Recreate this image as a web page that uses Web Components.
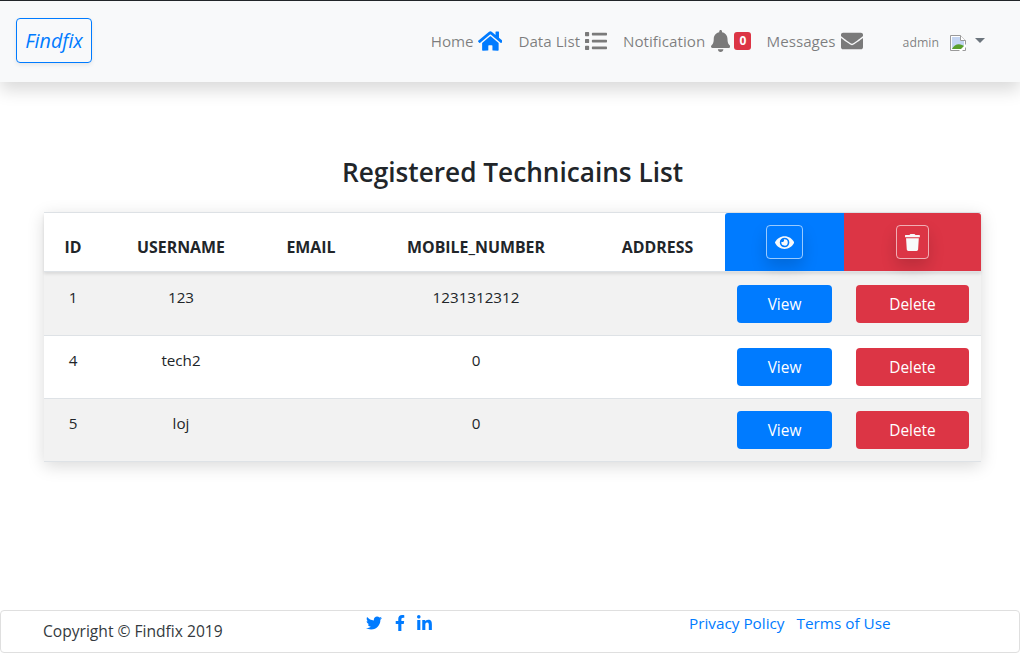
<!DOCTYPE html>
<html lang="en">
<head>
<meta charset="utf-8">
<title>Findfix</title>
<style>
  html, body { margin: 0; padding: 0; background: #fff; }
  body { font-family: "Open Sans", "Liberation Sans", sans-serif; font-size: 15px; color: #212529; overflow: hidden; height: 654px; }
</style>
</head>
<body>
<app-navbar>
  <nav-link label="Home" icon="home" active></nav-link>
  <nav-link label="Data List" icon="list"></nav-link>
  <nav-link label="Notification" icon="bell" badge="0"></nav-link>
  <nav-link label="Messages" icon="envelope"></nav-link>
</app-navbar>

<tech-list heading="Registered Technicains List">
  <tech-row uid="1" username="123" mobile="1231312312" shade></tech-row>
  <tech-row uid="4" username="tech2" mobile="0"></tech-row>
  <tech-row uid="5" username="loj" mobile="0" shade></tech-row>
</tech-list>

<app-footer></app-footer>

<script>
const ICONS = {
  home: ['0 0 576 512', 'M280.37 148.26L96 300.11V464a16 16 0 0 0 16 16l112.06-.29a16 16 0 0 0 15.92-16V368a16 16 0 0 1 16-16h64a16 16 0 0 1 16 16v95.64a16 16 0 0 0 16 16.05L464 480a16 16 0 0 0 16-16V300L295.67 148.26a12.19 12.19 0 0 0-15.3 0zM571.6 251.47L488 182.56V44.05a12 12 0 0 0-12-12h-56a12 12 0 0 0-12 12v72.61L318.47 43a48 48 0 0 0-61 0L4.34 251.47a12 12 0 0 0-1.6 16.9l25.5 31A12 12 0 0 0 45.15 301l235.22-193.74a12.19 12.19 0 0 1 15.3 0L530.9 301a12 12 0 0 0 16.9-1.6l25.5-31a12 12 0 0 0-1.7-16.93z'],
  list: ['0 0 512 512', 'M80 368H16a16 16 0 0 0-16 16v64a16 16 0 0 0 16 16h64a16 16 0 0 0 16-16v-64a16 16 0 0 0-16-16zm0-320H16A16 16 0 0 0 0 64v64a16 16 0 0 0 16 16h64a16 16 0 0 0 16-16V64a16 16 0 0 0-16-16zm0 160H16a16 16 0 0 0-16 16v64a16 16 0 0 0 16 16h64a16 16 0 0 0 16-16v-64a16 16 0 0 0-16-16zm416 176H176a16 16 0 0 0-16 16v32a16 16 0 0 0 16 16h320a16 16 0 0 0 16-16v-32a16 16 0 0 0-16-16zm0-320H176a16 16 0 0 0-16 16v32a16 16 0 0 0 16 16h320a16 16 0 0 0 16-16V80a16 16 0 0 0-16-16zm0 160H176a16 16 0 0 0-16 16v32a16 16 0 0 0 16 16h320a16 16 0 0 0 16-16v-32a16 16 0 0 0-16-16z'],
  bell: ['0 0 448 512', 'M224 512c35.32 0 63.97-28.65 63.97-64H160.03c0 35.35 28.65 64 63.97 64zm215.39-149.71c-19.32-20.76-55.47-51.99-55.47-154.29 0-77.7-54.48-139.9-127.94-155.16V32c0-17.67-14.32-32-31.98-32s-31.98 14.33-31.98 32v20.84C118.56 68.1 64.08 130.3 64.08 208c0 102.3-36.15 133.53-55.47 154.29-6 6.45-8.66 14.16-8.61 21.71.11 16.4 12.98 32 32.1 32h383.8c19.12 0 32-15.6 32.1-32 .05-7.55-2.61-15.27-8.61-21.71z'],
  envelope: ['0 0 512 512', 'M502.3 190.8c3.9-3.1 9.7-.2 9.7 4.7V400c0 26.5-21.5 48-48 48H48c-26.5 0-48-21.5-48-48V195.6c0-5 5.7-7.8 9.7-4.7 22.4 17.4 52.1 39.5 154.1 113.6 21.1 15.4 56.7 47.8 92.2 47.6 35.7.3 72-32.8 92.3-47.6 102-74.1 131.6-96.3 154-113.7zM256 320c23.2.4 56.6-29.2 73.4-41.4 132.7-96.3 142.8-104.7 173.4-128.7 5.8-4.5 9.2-11.5 9.2-18.9v-19c0-26.5-21.5-48-48-48H48C21.5 64 0 85.5 0 112v19c0 7.4 3.4 14.3 9.2 18.9 30.6 23.9 40.7 32.4 173.4 128.7 16.8 12.2 50.2 41.8 73.4 41.4z'],
  eye: ['0 0 576 512', 'M572.52 241.4C518.29 135.59 410.93 64 288 64S57.68 135.64 3.48 241.41a32.35 32.35 0 0 0 0 29.19C57.71 376.41 165.07 448 288 448s230.32-71.64 284.52-177.41a32.35 32.35 0 0 0 0-29.19zM288 400a144 144 0 1 1 144-144 143.93 143.93 0 0 1-144 144zm0-240a95.31 95.31 0 0 0-25.31 3.79 47.85 47.85 0 0 1-66.9 66.9A95.78 95.78 0 1 0 288 160z'],
  trash: ['0 0 448 512', 'M432 32H312l-9.4-18.7A24 24 0 0 0 281.1 0H166.8a23.72 23.72 0 0 0-21.4 13.3L136 32H16A16 16 0 0 0 0 48v32a16 16 0 0 0 16 16h416a16 16 0 0 0 16-16V48a16 16 0 0 0-16-16zM53.2 467a48 48 0 0 0 47.9 45h245.8a48 48 0 0 0 47.9-45L416 128H32z'],
  twitter: ['0 0 512 512', 'M459.37 151.716c.325 4.548.325 9.097.325 13.645 0 138.72-105.583 298.558-298.558 298.558-59.452 0-114.68-17.219-161.137-47.106 8.447.974 16.568 1.299 25.34 1.299 49.055 0 94.213-16.568 130.274-44.832-46.132-.975-84.792-31.188-98.112-72.772 6.498.974 12.995 1.624 19.818 1.624 9.421 0 18.843-1.3 27.614-3.573-48.081-9.747-84.143-51.98-84.143-102.985v-1.299c13.969 7.797 30.214 12.67 47.431 13.319-28.264-18.843-46.781-51.005-46.781-87.391 0-19.492 5.197-37.36 14.294-52.954 51.655 63.675 129.3 105.258 216.365 109.807-1.624-7.797-2.599-15.918-2.599-24.04 0-57.828 46.782-104.934 104.934-104.934 30.213 0 57.502 12.67 76.67 33.137 23.715-4.548 46.456-13.32 66.599-25.34-7.798 24.366-24.366 44.833-46.132 57.827 21.117-2.273 41.584-8.122 60.426-16.243-14.292 20.791-32.161 39.308-52.628 54.253z'],
  facebook: ['0 0 320 512', 'M279.14 288l14.22-92.66h-88.91v-60.13c0-25.35 12.42-50.06 52.24-50.06h40.42V6.26S260.43 0 225.36 0c-73.22 0-121.08 44.38-121.08 124.72v70.62H22.89V288h81.39v224h100.17V288z'],
  linkedin: ['0 0 448 512', 'M100.28 448H7.4V148.9h92.88zM53.79 108.1C24.09 108.1 0 83.5 0 53.8a53.79 53.79 0 0 1 107.58 0c0 29.7-24.1 54.3-53.79 54.3zM447.9 448h-92.68V302.4c0-34.7-.7-79.2-48.29-79.2-48.29 0-55.69 37.7-55.69 76.7V448h-92.78V148.9h89.08v40.8h1.3c12.4-23.2 42.69-48.3 87.88-48.3 94 0 111.28 61.9 111.28 142.3V448z']
};

function icon(name, size, color) {
  const [box, d] = ICONS[name];
  return `<svg viewBox="${box}" height="${size}" style="display:block;flex:none" fill="${color}"><path d="${d}"/></svg>`;
}

const BROKEN_IMG = `<svg width="16" height="16" viewBox="0 0 16 16" style="display:block;flex:none">
  <path d="M.5.5h10l5 5v10H.5z" fill="#fff" stroke="#9a9a9a"/>
  <path d="M2 2h8v4h4v8H2z" fill="#c5d6f2"/>
  <path d="M2 14c2-4 6-6 10-4l2 1v3z" fill="#5aa02c"/>
  <path d="M10.5.5v5h5" fill="#fff" stroke="#9a9a9a"/>
  <path d="M9 16l7-7v3l-4 4z" fill="#fff"/>
</svg>`;

class NavLink extends HTMLElement {
  connectedCallback() {
    const root = this.attachShadow({ mode: 'open' });
    const name = this.getAttribute('icon');
    const color = this.hasAttribute('active') ? '#007bff' : '#7a7a7a';
    const badge = this.getAttribute('badge');
    root.innerHTML = `
      <style>
        :host { display: flex; align-items: center; }
        a { display: flex; align-items: center; gap: 4px; color: rgba(0,0,0,.5); text-decoration: none; font-size: 15.2px; }
        .list, .envelope { gap: 5px; }
        .envelope { margin-left: -1px; }
        .bell svg { margin-left: 2px; }
        .badge { background: #dc3545; color: #fff; font-size: 12px; font-weight: 700; line-height: 18px; width: 17px; text-align: center; border-radius: 3px; }
      </style>
      <a href="#" class="${name}"><span>${this.getAttribute('label')}</span>${icon(name, 22, color)}${badge !== null ? `<span class="badge">${badge}</span>` : ''}</a>`;
  }
}

class AppNavbar extends HTMLElement {
  connectedCallback() {
    const root = this.attachShadow({ mode: 'open' });
    root.innerHTML = `
      <style>
        :host { display: flex; align-items: center; box-sizing: border-box; height: 82px; padding: 0 35px 2px 16px; background: #f8f9fa; border-top: 1px solid #212529; box-shadow: 0 8px 16px rgba(0,0,0,.15); position: relative; }
        .brand { box-sizing: border-box; width: 76px; height: 45px; border: 1px solid #007bff; border-radius: 4px; color: #007bff; font-size: 19.7px; font-style: italic; line-height: 43px; text-align: center; box-shadow: 0 2px 4px rgba(0,0,0,.08); }
        .links { display: flex; gap: 16px; margin-left: auto; }
        .user { display: flex; align-items: center; margin-left: 40px; color: rgba(0,0,0,.5); font-size: 12.3px; }
        .user span:first-child { margin-top: 3px; }
        .user svg { margin-left: 11px; margin-top: 4px; }
        .caret { margin-left: 9px; border-top: 5px solid #6c757d; border-left: 5px solid transparent; border-right: 5px solid transparent; }
      </style>
      <div class="brand">Findfix</div>
      <div class="links"><slot></slot></div>
      <div class="user"><span>admin</span>${BROKEN_IMG}<span class="caret"></span></div>`;
  }
}

const COLUMNS = '58px 158px 102px 228px 135px 119px 137px';

class TechList extends HTMLElement {
  connectedCallback() {
    const root = this.attachShadow({ mode: 'open' });
    const heads = ['ID', 'USERNAME', 'EMAIL', 'MOBILE_NUMBER', 'ADDRESS'];
    root.innerHTML = `
      <style>
        :host { display: block; margin: 0 39px 0 44px; }
        h2 { margin: 0; padding-top: 71px; height: 59px; font-size: 26.2px; font-weight: 600; line-height: 38px; text-align: center; color: #212529; }
        .table { box-shadow: 0 4px 16px rgba(0,0,0,.15); border-top: 1px solid #dee2e6; }
        .head { display: grid; grid-template-columns: ${COLUMNS}; height: 58px; border-bottom: 1px solid #dee2e6; box-shadow: 0 2px 3px rgba(0,0,0,.1); position: relative; }
        .head div { display: flex; align-items: center; justify-content: center; font-size: 15.9px; font-weight: 700; color: #212529; padding-top: 9px; box-sizing: border-box; }
        .head .act { padding-top: 0; }
        .act.blue { background: #007bff; border-radius: 3px 0 0 0; }
        .act.red { background: #dc3545; border-radius: 0 3px 0 0; }
        .chip { box-sizing: border-box; height: 34px; border: 1px solid rgba(255,255,255,.6); border-radius: 4px; display: flex; align-items: center; justify-content: center; box-shadow: 0 8px 16px rgba(0,0,0,.15); }
      </style>
      <h2>${this.getAttribute('heading')}</h2>
      <div class="table">
        <div class="head">
          ${heads.map(h => `<div>${h}</div>`).join('')}
          <div class="act blue"><span class="chip" style="width:37px">${icon('eye', 17, '#f8f9fa')}</span></div>
          <div class="act red"><span class="chip" style="width:33px">${icon('trash', 17, '#f8f9fa')}</span></div>
        </div>
        <slot></slot>
      </div>`;
  }
}

class TechRow extends HTMLElement {
  connectedCallback() {
    const root = this.attachShadow({ mode: 'open' });
    const shade = this.hasAttribute('shade');
    root.innerHTML = `
      <style>
        :host { display: grid; grid-template-columns: ${COLUMNS}; height: 63px; box-sizing: border-box; border-bottom: 1px solid #dee2e6; background: ${shade ? '#f2f2f2' : '#fff'}; font-size: 15.2px; color: #212529; }
        :host(:first-child) { height: 64px; padding-top: 1px; }
        div { text-align: center; padding-top: 13px; line-height: 22px; }
        .act { padding-top: 12px; }
        a { display: block; box-sizing: border-box; height: 38px; margin: 0 auto; line-height: 40px; color: #fff; border-radius: 4px; text-decoration: none; text-align: center; font-size: 15.4px; }
        .view { width: 95px; background: #007bff; }
        .del { width: 113px; background: #dc3545; }
      </style>
      <div>${this.getAttribute('uid')}</div>
      <div>${this.getAttribute('username')}</div>
      <div></div>
      <div>${this.getAttribute('mobile')}</div>
      <div></div>
      <div class="act"><a class="view" href="#">View</a></div>
      <div class="act"><a class="del" href="#">Delete</a></div>`;
  }
}

class AppFooter extends HTMLElement {
  connectedCallback() {
    const root = this.attachShadow({ mode: 'open' });
    root.innerHTML = `
      <style>
        :host { display: flex; box-sizing: border-box; height: 43px; margin-top: 148px; padding-left: 42px; background: #fff; border: 1px solid #dfdfdf; border-radius: 4px; font-size: 15.3px; }
        .copy { width: 323px; padding-top: 8px; line-height: 24px; color: #343a40; font-size: 15.6px; }
        .social { display: flex; gap: 12px; width: 323px; padding-top: 4px; align-items: flex-start; }
        .social svg:nth-child(2) { margin-left: 1px; }
        .links { display: flex; gap: 12px; line-height: 24px; }
        a { color: #007bff; text-decoration: none; }
      </style>
      <div class="copy">Copyright © Findfix 2019</div>
      <div class="social">${icon('twitter', 16, '#007bff')}${icon('facebook', 16, '#007bff')}${icon('linkedin', 17, '#007bff')}</div>
      <div class="links"><a href="#">Privacy Policy</a><a href="#">Terms of Use</a></div>`;
  }
}

customElements.define('nav-link', NavLink);
customElements.define('app-navbar', AppNavbar);
customElements.define('tech-list', TechList);
customElements.define('tech-row', TechRow);
customElements.define('app-footer', AppFooter);
</script>
</body>
</html>
